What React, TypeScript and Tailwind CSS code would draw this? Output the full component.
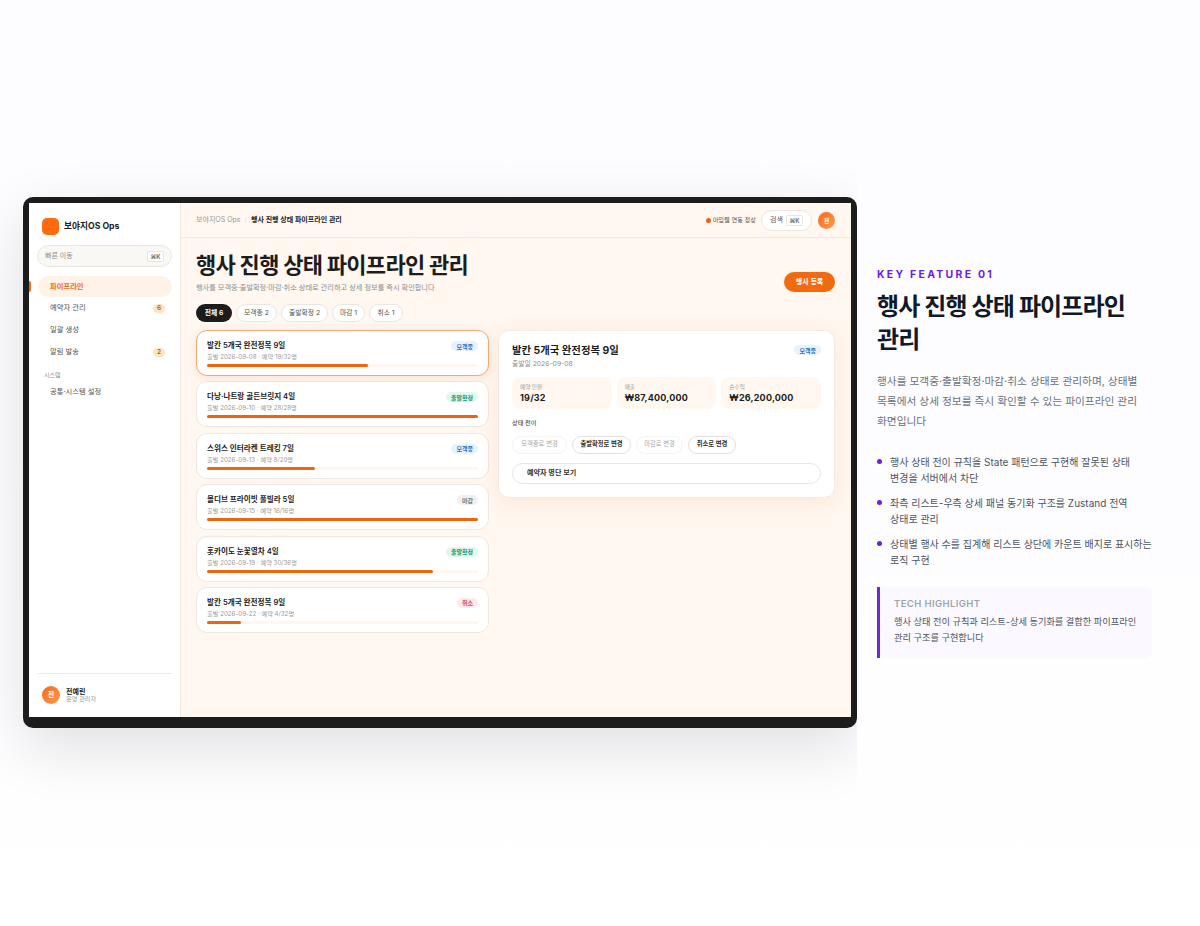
import React from "react";

const font = "font-['Inter','Noto_Sans_CJK_KR',sans-serif]";

const tabs = [
  { label: "전체 6", active: true, w: "w-[36px]" },
  { label: "모객중 2", w: "w-[41px]" },
  { label: "출발확정 2", w: "w-[47px]" },
  { label: "마감 1", w: "w-[33px]" },
  { label: "취소 1", w: "w-[34px]" },
];

const badgeStyles: Record<string, string> = {
  모객중: "bg-[#e8f2fd] text-[#1f6fc0]",
  출발확정: "bg-[#e2f7ec] text-[#15935a]",
  마감: "bg-[#f0f0f0] text-[#777777]",
  취소: "bg-[#fde8ea] text-[#c8404f]",
};

const events = [
  { title: "발칸 5개국 완전정복 9일", meta: "출발 2026-09-08 · 예약 19/32명", status: "모객중", pct: "w-[59.4%]" },
  { title: "다낭·나트랑 골든브릿지 4일", meta: "출발 2026-09-10 · 예약 28/28명", status: "출발확정", pct: "w-full" },
  { title: "스위스 인터라켄 트레킹 7일", meta: "출발 2026-09-13 · 예약 8/20명", status: "모객중", pct: "w-[40%]" },
  { title: "몰디브 프라이빗 풀빌라 5일", meta: "출발 2026-09-15 · 예약 16/16명", status: "마감", pct: "w-full" },
  { title: "홋카이도 눈꽃열차 4일", meta: "출발 2026-09-19 · 예약 30/36명", status: "출발확정", pct: "w-[83.3%]" },
  { title: "발칸 5개국 완전정복 9일", meta: "출발 2026-09-22 · 예약 4/32명", status: "취소", pct: "w-[12.5%]" },
];

const Badge = ({ status }: { status: string }) => (
  <span className={`rounded-full px-[5px] h-[10px] mt-[1px] flex items-center text-[6px] font-semibold ${badgeStyles[status]}`}>{status}</span>
);

const Kbd = () => (
  <span className="h-[11px] w-[17px] flex items-center justify-center rounded-[2px] border border-[#e8e4df] bg-white text-[6px] font-semibold text-[#666666]">⌘K</span>
);

const Sidebar = () => (
  <aside className="w-[152px] h-full shrink-0 bg-white border-r border-[#eee8e1] flex flex-col relative">
    <div className="flex items-center gap-[5px] pl-[13px] pt-[15px]">
      <div className="w-[17px] h-[17px] rounded-[5px] bg-[#ff6a0d]"></div>
      <span className="text-[8.7px] font-bold text-[#1c1c1c]">보야지OS Ops</span>
    </div>
    <div className="mx-[8px] mt-[10px] h-[22px] rounded-full border border-[#ece7e1] bg-[#faf8f5] flex items-center justify-between pl-[7px] pr-[7px]">
      <span className="text-[7px] text-[#8d8d8d]">빠른 이동</span>
      <Kbd />
    </div>
    <nav className="mt-[9px] flex flex-col">
      <div className="ml-[9px] mr-[8px] h-[21px] rounded-full bg-[#fff3e8] pl-[12px] pt-[1px] flex items-center text-[7.3px] font-semibold text-[#f26a16]">파이프라인</div>
      <div className="absolute left-0 top-[78px] w-[2px] h-[11px] rounded-r bg-[#f26a16]"></div>
      <div className="ml-[9px] mr-[8px] mt-[1px] h-[21px] pl-[12px] pr-[7px] flex items-center justify-between text-[7.3px] text-[#555555]">
        예약자 관리
        <span className="h-[9px] w-[12px] rounded-full bg-[#fde5bf] flex items-center justify-center text-[6.5px] font-semibold text-[#a3660f]">6</span>
      </div>
      <div className="ml-[9px] mr-[8px] mt-[1px] h-[21px] pl-[12px] flex items-center text-[7.3px] text-[#555555]">일괄 생성</div>
      <div className="ml-[9px] mr-[8px] mt-[1px] h-[21px] pl-[12px] pr-[7px] flex items-center justify-between text-[7.3px] text-[#555555]">
        알림 발송
        <span className="h-[9px] w-[12px] rounded-full bg-[#fde5bf] flex items-center justify-center text-[6.5px] font-semibold text-[#a3660f]">2</span>
      </div>
      <div className="pl-[15px] mt-[6px] h-[10px] flex items-center text-[6px] text-[#8d8d8d]">시스템</div>
      <div className="ml-[9px] mr-[8px] mt-[3px] h-[21px] pl-[12px] flex items-center text-[7.3px] text-[#555555]">공통·시스템 설정</div>
    </nav>
    <div className="mt-auto ml-[9px] mr-[8px] h-[44px] border-t border-[#ece9e5] flex items-center gap-[6px] pl-[4px] pb-[1px]">
      <div className="w-[18px] h-[18px] rounded-full bg-gradient-to-br from-[#f46a12] to-[#ff9a4d] flex items-center justify-center text-[7px] font-semibold text-white">전</div>
      <div className="flex flex-col leading-none gap-[1px]">
        <span className="text-[7px] font-semibold text-[#222222]">전예린</span>
        <span className="text-[6.2px] text-[#9a9a9a]">운영 관리자</span>
      </div>
    </div>
  </aside>
);

const TopBar = () => (
  <div className="h-[35px] shrink-0 border-b border-[#efe9e2] flex items-center justify-between pl-[15px] pr-[16px]">
    <div className="flex items-center gap-[4px] text-[7px]">
      <span className="text-[#9a9a9a]">보야지OS Ops</span>
      <span className="text-[#e2ddd6]">/</span>
      <span className="font-semibold text-[#222222]">행사 진행 상태 파이프라인 관리</span>
    </div>
    <div className="flex items-center">
      <span className="w-[5px] h-[5px] rounded-full bg-[#ea6410]"></span>
      <span className="ml-[2px] text-[6.2px] text-[#555555]">아임웹 연동 정상</span>
      <div className="ml-[5px] h-[21px] w-[51px] rounded-full border border-[#ebe6e0] bg-white flex items-center justify-center gap-[3px]">
        <span className="text-[7px] text-[#555555]">검색</span>
        <Kbd />
      </div>
      <div className="ml-[6px] w-[17px] h-[17px] rounded-full bg-gradient-to-br from-[#f46a12] to-[#ff9a4d] flex items-center justify-center text-[6px] font-semibold text-white">전</div>
    </div>
  </div>
);

const EventCard = ({ e, selected }: { e: (typeof events)[number]; selected?: boolean }) => (
  <div className={`h-[46px] rounded-[11px] bg-white px-[10px] pt-[9px] ${selected ? "border border-[#f5a873] shadow-[0_2px_10px_rgba(244,120,40,0.16)]" : "border border-[#eee8e2]"}`}>
    <div className="flex justify-between">
      <div className="text-[7.6px] leading-[12px] font-semibold text-[#222222]">{e.title}</div>
      <Badge status={e.status} />
    </div>
    <div className="text-[6.2px] leading-[9px] text-[#9a9a9a]">{e.meta}</div>
    <div className="mt-[3px] h-[3px] rounded-full bg-[#fff6ef]">
      <div className={`h-full rounded-full bg-[#ee640f] ${e.pct}`}></div>
    </div>
  </div>
);

const Stat = ({ label, value }: { label: string; value: string }) => (
  <div className="flex-1 h-[32px] rounded-[8px] bg-[#fff7f0] pl-[8px] pt-[6px]">
    <div className="text-[5.6px] leading-[8px] text-[#999999]">{label}</div>
    <div className="mt-[1px] text-[9px] leading-[12px] font-bold text-[#1c1c1c] tracking-[0.2px]">{value}</div>
  </div>
);

const Detail = () => (
  <div className="w-[337px] h-[168px] rounded-[11px] bg-white border border-[#f0ebe6] shadow-[0_4px_20px_rgba(244,130,60,0.14)] px-[13px] pt-[13px]">
    <div className="flex justify-between items-start">
      <div>
        <div className="text-[10.4px] leading-[14px] font-bold text-[#1c1c1c]">발칸 5개국 완전정복 9일</div>
        <div className="mt-[1px] text-[6.8px] leading-[10px] text-[#8d8d8d]">출발일 2026-09-08</div>
      </div>
      <Badge status="모객중" />
    </div>
    <div className="mt-[8px] flex gap-[5px]">
      <Stat label="예약 인원" value="19/32" />
      <Stat label="매출" value="₩87,400,000" />
      <Stat label="순수익" value="₩26,200,000" />
    </div>
    <div className="mt-[9px] text-[6.2px] leading-[9px] font-medium text-[#555555]">상태 전이</div>
    <div className="mt-[9px] flex gap-[5px]">
      <div className="h-[18px] w-[55px] rounded-full border border-[#f5f3f0] flex items-center justify-center text-[6.3px] text-[#aaaaaa]">모객중로 변경</div>
      <div className="h-[18px] w-[59px] rounded-full border border-[#e4e0db] flex items-center justify-center text-[6.3px] font-semibold text-[#333333]">출발확정로 변경</div>
      <div className="h-[18px] w-[47px] rounded-full border border-[#f5f3f0] flex items-center justify-center text-[6.3px] text-[#aaaaaa]">마감로 변경</div>
      <div className="h-[18px] w-[48px] rounded-full border border-[#e4e0db] flex items-center justify-center text-[6.3px] font-semibold text-[#333333]">취소로 변경</div>
    </div>
    <div className="mt-[9px] h-[21px] rounded-full border border-[#e8e4df] flex items-center pl-[14px] text-[7.1px] font-semibold text-[#333333]">예약자 명단 보기</div>
  </div>
);

const Main = () => (
  <main className="flex-1 h-full bg-[#fff7f0] flex flex-col">
    <TopBar />
    <div className="pl-[15px] pr-[16px]">
      <div className="flex justify-between items-end pt-[14px]">
        <div>
          <h1 className="text-[22px] leading-[26px] tracking-[-0.7px] font-bold text-[#1c1c1c]">행사 진행 상태 파이프라인 관리</h1>
          <p className="mt-[5px] text-[7.2px] leading-[10px] text-[#8d8d8d]">행사를 모객중·출발확정·마감·취소 상태로 관리하고 상세 정보를 즉시 확인합니다</p>
        </div>
        <button className="w-[51px] h-[20px] mb-[1px] rounded-full bg-[#f26a0f] text-white text-[7px] font-semibold">행사 등록</button>
      </div>
      <div className="mt-[11px] flex gap-[4px]">
        {tabs.map((t) => (
          <div
            key={t.label}
            className={`h-[18px] ${t.w} rounded-full flex items-center justify-center text-[6.8px] ${t.active ? "bg-[#1c1c1c] text-white font-semibold" : "bg-white border border-[#ebe6e0] text-[#555555]"}`}
          >
            {t.label}
          </div>
        ))}
      </div>
      <div className="mt-[8px] flex gap-[9px] items-start">
        <div className="w-[293px] flex flex-col gap-[5.4px]">
          {events.map((e, i) => (
            <EventCard key={i} e={e} selected={i === 0} />
          ))}
        </div>
        <Detail />
      </div>
    </div>
  </main>
);

const Feature = () => (
  <section className="w-[275px] ml-[20px] mt-[269px]">
    <div className="text-[10.5px] leading-[12px] font-bold tracking-[2.25px] text-[#6d1fe0]">KEY FEATURE 01</div>
    <h2 className="mt-[9px] text-[24px] leading-[33px] tracking-[-0.85px] font-bold text-[#111827]">행사 진행 상태 파이프라인<br />관리</h2>
    <p className="mt-[16px] text-[10.7px] leading-[20px] text-[#6b7280]">행사를 모객중·출발확정·마감·취소 상태로 관리하며, 상태별<br />목록에서 상세 정보를 즉시 확인할 수 있는 파이프라인 관리<br />화면입니다</p>
    <ul className="mt-[22px] flex flex-col gap-[9px] text-[10px] leading-[16px] text-[#4b5563]">
      <li className="flex gap-[8px]"><span className="mt-[5px] w-[5px] h-[5px] rounded-full bg-[#6d1fe0] shrink-0"></span><span>행사 상태 전이 규칙을 State 패턴으로 구현해 잘못된 상태<br />변경을 서버에서 차단</span></li>
      <li className="flex gap-[8px]"><span className="mt-[5px] w-[5px] h-[5px] rounded-full bg-[#6d1fe0] shrink-0"></span><span>좌측 리스트-우측 상세 패널 동기화 구조를 Zustand 전역<br />상태로 관리</span></li>
      <li className="flex gap-[8px]"><span className="mt-[5px] w-[5px] h-[5px] rounded-full bg-[#6d1fe0] shrink-0"></span><span>상태별 행사 수를 집계해 리스트 상단에 카운트 배지로 표시하는<br />로직 구현</span></li>
    </ul>
    <div className="mt-[19px] h-[71px] border-l-[3px] border-[#6d28d9] bg-[#fbf9ff] rounded-r-[6px] pl-[14px] pt-[10px]">
      <div className="text-[9.5px] leading-[14px] font-semibold tracking-[0.4px] text-[#9ca3af]">TECH HIGHLIGHT</div>
      <div className="mt-[3px] text-[9.2px] leading-[16px] text-[#4b5563]">행사 상태 전이 규칙과 리스트-상세 동기화를 결합한 파이프라인<br />관리 구조를 구현합니다</div>
    </div>
  </section>
);

export default function App() {
  return (
    <div className={`${font} w-[1200px] h-[926px] overflow-hidden flex bg-gradient-to-b from-[#fdfcff] via-[#fdfcff] to-white`}>
      <div className="w-[857px] shrink-0 overflow-hidden pl-[23px] pt-[197px] h-[860px]">
        <div className="w-[834px] h-[531px] rounded-[10px] bg-[#1c1c1c] border-t-[6px] border-x-[6px] border-b-[11px] border-[#1c1c1c] shadow-[0_20px_60px_rgba(0,0,0,0.12)]">
          <div className="w-full h-full flex overflow-hidden">
            <Sidebar />
            <Main />
          </div>
        </div>
      </div>
      <Feature />
    </div>
  );
}
